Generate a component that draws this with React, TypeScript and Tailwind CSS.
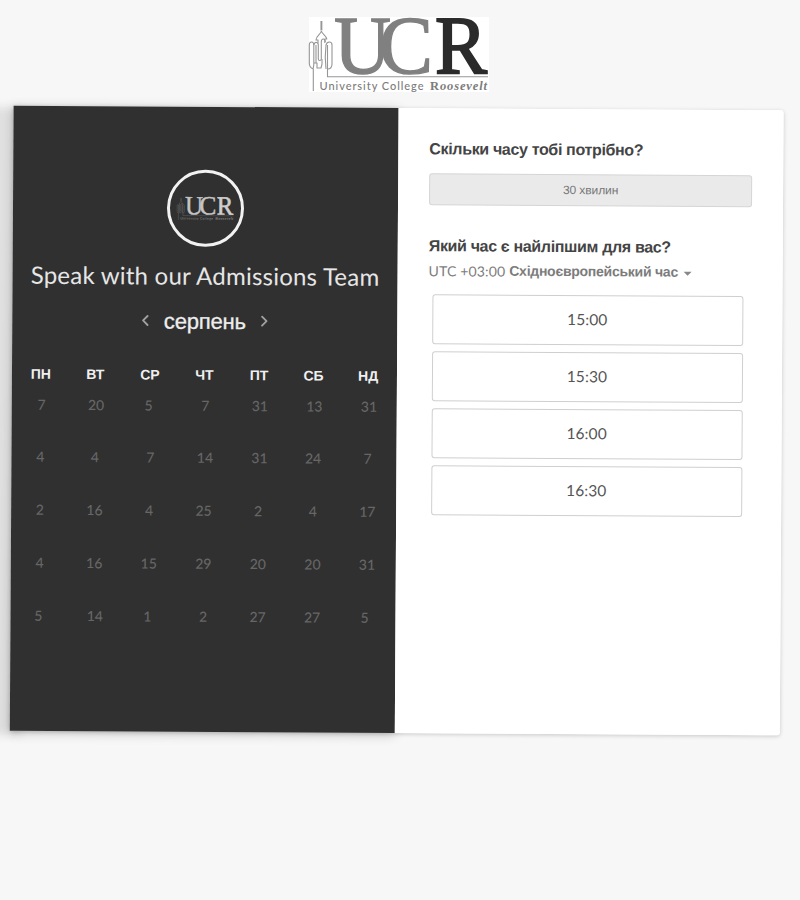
import React from "react";
import { ChevronLeft, ChevronRight } from "lucide-react";

const sans = "font-['Liberation_Sans',Arial,sans-serif]";
const lato = "font-['Lato',sans-serif]";

const weekdays = ["ПН", "ВТ", "СР", "ЧТ", "ПТ", "СБ", "НД"];

// [label, horizontal nudge in px]
const days: [number, number][][] = [
  [[7, 1], [20, 1], [5, -1], [7, 1], [31, 1], [13, 1], [31, 1]],
  [[4, 0], [4, 0], [7, 1], [14, 1], [31, 1], [24, 0], [7, 0]],
  [[2, 0], [16, 0], [4, 0], [25, 0], [2, 0], [4, 0], [17, 0]],
  [[4, 0], [16, 0], [15, 0], [29, 0], [20, 0], [20, 0], [31, 0]],
  [[5, -1], [14, 1], [1, -1], [2, 0], [27, 0], [27, 0], [5, -2]],
];

const slots = ["15:00", "15:30", "16:00", "16:30"];

type LogoProps = { className: string; u: string; r: string; tower: string; text: string };

function Logo({ className, u, r, tower, text }: LogoProps) {
  return (
    <svg viewBox="0 0 180 76" className={`overflow-visible ${className}`}>
      <g fill="none" stroke={tower} strokeWidth="1.1" strokeLinejoin="round">
        <path d="M12.800 4v9.500M12 4v9.500" />
        <path d="M12.400 14c-.5 3-5.400 5-5.400 9h2v3M12.400 14c.5 3 5.400 5 5.400 8h-2v4" />
        <path d="M4.300 74V52c-3-1-4-3-4-6V28c0-4 4.500-4 4.500 0v19c0 3-1 4-.5 5" />
        <path d="M4.800 28c1-4 5-3 4.500 1v13c0 2 3 2 3 0V25c0-4 4-4 4 0" />
        <path d="M5 46h3v5h4l1-4v-5M7 46v-18" />
        <path d="M17 52c-1-8-1-16 0-24 1-4 6-4 6 0v19c0 4-2 5-4.500 5v-24M18.500 52v7.700H179" />
      </g>
      <g fontFamily="Liberation Serif" fontSize="83" strokeWidth="1.4">
        <text x="25" y="55.500" fill={u} stroke={u} textLength="57" lengthAdjust="spacingAndGlyphs">U</text>
        <text x="70" y="55.500" fill={u} stroke={u} textLength="54" lengthAdjust="spacingAndGlyphs">C</text>
        <text x="126" y="55.500" fill={r} stroke={r} strokeWidth="2" textLength="52" lengthAdjust="spacingAndGlyphs">R</text>
      </g>
      <text x="10.500" y="72.500" fontFamily="Lato" fontSize="11" fontWeight="500" fill={text} textLength="104">University College</text>
      <text x="121" y="72.500" fontFamily="Liberation Serif" fontSize="12.500" fontWeight="bold" fill={text} textLength="57"><tspan>R</tspan><tspan fontStyle="italic">oosevelt</tspan></text>
    </svg>
  );
}

export default function App() {
  return (
    <div className={`relative h-[900px] w-[800px] overflow-hidden bg-[#f7f7f7] ${sans}`}>
      <div className="absolute top-[107px] -left-4 h-[628px] w-9 bg-[#e0e0e0] blur-[4px]" />
      <header className="flex h-[108px] justify-center pr-[2px] pt-[17px]">
        <div className="h-[75px] w-[180px] bg-white">
          <Logo className="h-[76px] w-[180px]" u="#808080" r="#2b2b2b" tower="#969696" text="#7c7c7c" />
        </div>
      </header>
      <main className="relative ml-[11px] flex h-[625px] w-[770px] translate-x-[0.7px] rotate-[0.35deg] rounded-[3px] bg-white shadow-[0_1px_4px_rgba(0,0,0,0.2)]">
        <section className="flex w-[385px] flex-col items-center bg-[#303030] pt-[63px] text-white shadow-[0_2px_12px_rgba(0,0,0,0.2)]">
          <div className="flex size-[77px] items-center justify-center rounded-full border-3 border-[#f2f2f2]">
            <Logo className="h-6 w-[57px]" u="#c4c4c4" r="#cecece" tower="#777777" text="#858585" />
          </div>
          <h1 className={`mt-[11px] h-9 text-[24px] leading-9 tracking-[0.23px] whitespace-nowrap text-[#e6e6e6] ${lato}`}>Speak with our Admissions Team</h1>
          <div className="mt-[11px] flex h-8 items-center gap-[10px]">
            <ChevronLeft strokeWidth={2.5} className="size-[18px] text-[#a0a0a0]" />
            <span className="text-[22px] tracking-[-0.2px] text-[#eeeeee] [-webkit-text-stroke:0.3px_#eeeeee]">серпень</span>
            <ChevronRight strokeWidth={2.5} className="size-[18px] text-[#a0a0a0]" />
          </div>
          <div className="mt-[28px] grid w-[382px] grid-cols-7 text-center text-[14px] leading-5 font-bold text-[#f0f0f0]">
            {weekdays.map((d) => <span key={d}>{d}</span>)}
          </div>
          <div className={`mt-[2.500px] flex w-[382px] flex-col text-[14px] font-medium text-[#666666] ${lato}`}>
            {days.map((week, i) => (
              <div key={i} className="grid h-[52.9px] grid-cols-7 text-center leading-[36px]">
                {week.map(([n, dx], j) => (
                  <span key={j} style={{ transform: `translateX(${dx}px)` }}>{n}</span>
                ))}
              </div>
            ))}
          </div>
        </section>
        <section className="relative flex flex-1 flex-col rounded-r-[3px] bg-white pt-[30.500px] pl-[31px]">
          <h2 className="h-5 text-[16px] leading-5 font-bold tracking-[-0.34px] text-[#444444]">Скільки часу тобі потрібно?</h2>
          <button className="mt-[14.500px] h-8 w-[323px] rounded-[3px] border border-[#d5d5d5] bg-[#eaeaea] pb-px text-[12px] tracking-[-0.1px] text-[#777777]">30 хвилин</button>
          <h2 className="mt-[30.500px] h-5 text-[16px] leading-5 font-bold tracking-[-0.34px] text-[#444444]">Який час є найліпшим для вас?</h2>
          <div className="mt-[5px] flex h-5 items-center text-[14px] font-bold text-[#7c7c7c]">
            <span className={`mr-1 font-normal tracking-[0.15px] ${lato}`}>UTC +03:00</span>
            <span className="tracking-[-0.25px]">Східноєвропейський час</span>
            <span className="mt-0.5 ml-[6px] border-x-4 border-t-4 border-x-transparent border-t-[#888888]" />
          </div>
          <div className="mt-[13.800px] ml-[3.500px] flex w-[311px] flex-col gap-[7px]">
            {slots.map((s) => (
              <button key={s} className={`h-[50px] rounded-[3px] border border-[#cfcfcf] bg-white pb-px text-[15.500px] tracking-[0.1px] text-[#555555] ${lato}`}>{s}</button>
            ))}
          </div>
        </section>
      </main>
    </div>
  );
}
